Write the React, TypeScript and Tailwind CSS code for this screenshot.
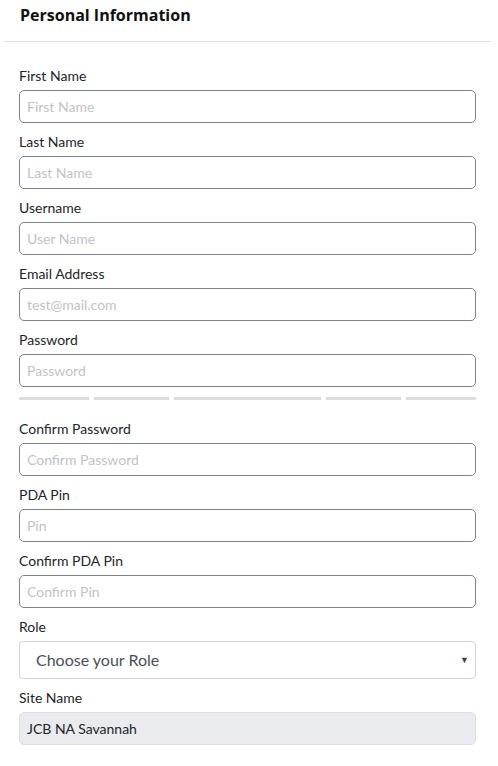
import React from "react";

const Field = ({ label, placeholder }: { label: string; placeholder: string }) => (
  <div className="mb-[8px]">
    <div className="h-[21px] mb-[4px] text-[14px] leading-[21px] text-[#212529]">{label}</div>
    <input
      className="block w-full h-[33px] px-[7px] rounded-[5px] border border-[#7b8390] bg-white text-[14px] placeholder:text-[#bfc3c8] outline-none"
      placeholder={placeholder}
    />
  </div>
);

export default function App() {
  return (
    <div className="w-[498px] min-h-[766px] bg-white" style={{ fontFamily: "Lato, 'Open Sans', sans-serif" }}>
      <div className="h-[41px] pl-[20px] pt-[4px]">
        <div className="text-[16px] leading-[22px] font-bold text-[#111]" style={{ fontFamily: "'Open Sans', sans-serif" }}>
          Personal Information
        </div>
      </div>
      <div className="ml-[4px] w-[487px] h-[1px] bg-[#e3e3e3]" />
      <div className="ml-[19px] w-[457px] pt-[23px]">
        <Field label="First Name" placeholder="First Name" />
        <Field label="Last Name" placeholder="Last Name" />
        <Field label="Username" placeholder="User Name" />
        <Field label="Email Address" placeholder="test@mail.com" />
        <div className="mb-[18px]">
          <div className="h-[21px] mb-[4px] text-[14px] leading-[21px] text-[#212529]">Password</div>
          <input
            type="password"
            className="block w-full h-[33px] px-[7px] rounded-[5px] border border-[#7b8390] bg-white text-[14px] placeholder:text-[#bfc3c8] outline-none"
            placeholder="Password"
          />
          <div className="mt-[10px] flex gap-[5px]">
            <div className="w-[70px] h-[3px] bg-[#dddddd]" />
            <div className="w-[75px] h-[3px] bg-[#dddddd]" />
            <div className="w-[147px] h-[3px] bg-[#dddddd]" />
            <div className="w-[75px] h-[3px] bg-[#dddddd]" />
            <div className="w-[70px] h-[3px] bg-[#dddddd]" />
          </div>
        </div>
        <Field label="Confirm Password" placeholder="Confirm Password" />
        <Field label="PDA Pin" placeholder="Pin" />
        <Field label="Confirm PDA Pin" placeholder="Confirm Pin" />
        <div className="mb-[8px]">
          <div className="h-[21px] mb-[4px] text-[14px] leading-[21px] text-[#212529]">Role</div>
          <div className="relative h-[38px] rounded-[4px] border border-[#ced4da] bg-white flex items-center pl-[16px]">
            <span className="text-[16px] text-[#495057]">Choose your Role</span>
            <span className="absolute right-[6px] top-[13px] text-[9px] leading-[9px] text-[#444]">▼</span>
          </div>
        </div>
        <div className="mb-[8px]">
          <div className="h-[21px] mb-[4px] text-[14px] leading-[21px] text-[#212529]">Site Name</div>
          <div className="h-[33px] rounded-[5px] border border-[#dcdfe3] bg-[#e9ebee] flex items-center px-[7px] text-[14px] text-[#212529]">
            JCB NA Savannah
          </div>
        </div>
      </div>
    </div>
  );
}
